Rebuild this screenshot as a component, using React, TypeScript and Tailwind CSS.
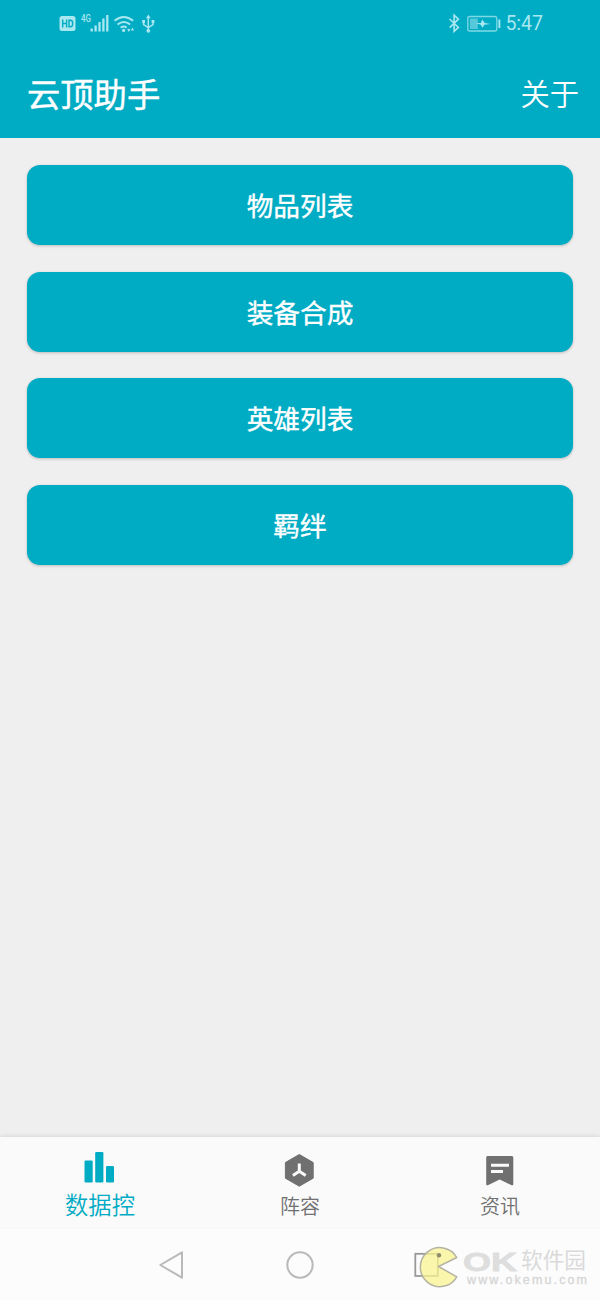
import type { ReactNode } from "react";

const ACTIONS = ["物品列表", "装备合成", "英雄列表", "羁绊"];

function StatusBar() {
  return (
    <div className="flex h-[47px] items-center justify-between pl-[59px] pr-[57px] text-[#a9e8f0]">
      <svg width="98" height="24" viewBox="0 0 98 24" fill="none" stroke="currentColor">
        {/* HD badge */}
        <rect x="0.5" y="4" width="16" height="15" rx="2.5" fill="currentColor" stroke="none" />
        <path d="M3.7 7.5v8M7.6 7.5v8M3.7 11.5h3.9M10 8.2v6.6h1.3q2.3 0 2.3-2.2v-2.2q0-2.2-2.3-2.2z" stroke="#00abc4" strokeWidth="1.4" />
        <text x="22" y="10" fontSize="11" fontWeight="500" fill="currentColor" stroke="none" textLength="10" lengthAdjust="spacingAndGlyphs" className="font-[Roboto,sans-serif]">4G</text>
        {/* signal */}
        <path d="M32.7 19.5v-3M36.6 19.5v-6M40.5 19.5V10M44.4 19.5V6.5M48.3 19.5V3" strokeWidth="2.3" />
        {/* wifi */}
        <path d="M55.5 8.8q9.3-7.5 18.7 0M58.5 12.6q6.4-5 12.6 0M61.6 15.7q3.3-2.3 6 0" strokeWidth="1.9" />
        <circle cx="64.6" cy="18.4" r="1.6" fill="currentColor" stroke="none" />
        <path d="M69.8 20l-1.6-3h3.2zM73.4 15.5l1.6 3h-3.2z" fill="currentColor" stroke="none" />
        {/* usb */}
        <path d="M89.3 5v13M84.6 9.5v3.2l4.7 3M94 9.5v3.2l-4.7 3" strokeWidth="1.5" />
        <path d="M89.3 2.5l2.4 3.7h-4.8zM83.2 8h2.8v3h-2.8zM92.6 8h2.8v3h-2.8z" fill="currentColor" stroke="none" />
        <circle cx="89.3" cy="18.8" r="1.9" fill="currentColor" stroke="none" />
      </svg>
      <div className="flex items-center">
        <svg width="54" height="24" viewBox="0 0 54 24" fill="none" stroke="currentColor">
          <path d="M2.6 7l8.8 8.4-4.3 4V3.2l4.3 4-8.8 8.4" strokeWidth="1.6" />
          <rect x="20.8" y="4.5" width="29" height="14.5" rx="2" strokeWidth="1.3" opacity="0.75" />
          <rect x="22.8" y="6.5" width="8" height="10.5" fill="currentColor" stroke="none" opacity="0.5" />
          <path d="M28.5 11.2l5.5-.3 1.2-3.4 2.6 3.4 5.8 1.1-6.4.8-1.5 3-2.3-3.2z" fill="currentColor" stroke="none" />
          <path d="M52.4 7.5v8.5" strokeWidth="1.9" />
        </svg>
        <span className="ml-1 font-[Roboto,sans-serif] text-[19.5px] leading-6">5:47</span>
      </div>
    </div>
  );
}

function ActionButton({ label }: { label: string }) {
  return (
    <button className="h-20 w-full rounded-[13px] bg-[#00abc4] text-[26.7px] font-normal text-white shadow-[0_1px_3px_rgba(0,0,0,0.22)] [-webkit-text-stroke:0.4px_white]">
      {label}
    </button>
  );
}

function Tab({ label, active, children }: { label: string; active?: boolean; children: ReactNode }) {
  return (
    <div className={active ? "flex flex-1 flex-col items-center pt-[13px] text-[#00abc4]" : "flex flex-1 flex-col items-center pt-[15px] text-[#707070]"}>
      {children}
      <span className={active ? "mt-[4px] text-[23.3px] font-[350] leading-7" : "mt-[4px] text-[20px] font-[350] leading-7"}>
        {label}
      </span>
    </div>
  );
}

function Watermark() {
  return (
    <svg className="absolute left-[410px] top-[1240px]" width="190" height="60" viewBox="0 0 190 60">
      <path d="M46.8 17.5A19.5 19.5 0 1 0 46.8 36.8L28.5 26.5z" fill="#f9f692" fillOpacity="0.75" stroke="#b5b3a4" strokeWidth="1.5" strokeLinejoin="round" />
      <circle cx="29" cy="15.2" r="2.2" fill="#8f8d70" />
      <text x="53" y="30.5" fontSize="26" fontWeight="700" fill="#dedede" stroke="#dedede" strokeWidth="0.8" textLength="54" lengthAdjust="spacingAndGlyphs" className="font-['Liberation_Sans',sans-serif]">OK</text>
      <text x="111" y="28" fontSize="22" fill="#dadada" textLength="65" lengthAdjust="spacingAndGlyphs">软件园</text>
      <text x="57" y="44" fontSize="12.5" fill="#d6d6d6" stroke="#d6d6d6" strokeWidth="0.3" textLength="120" className="font-['Liberation_Sans',sans-serif]">www.okemu.com</text>
    </svg>
  );
}

export default function App() {
  return (
    <div className="relative flex h-[1300px] w-[600px] flex-col overflow-hidden bg-[#efefef] font-['Noto_Sans_CJK_SC',sans-serif]">
      <header className="h-[138px] shrink-0 bg-[#00abc4]">
        <StatusBar />
        <div className="flex h-[91px] items-center justify-between pl-[27px] pr-[21px] text-white">
          <h1 className="text-[33.3px] font-normal leading-none [-webkit-text-stroke:0.4px_white]">云顶助手</h1>
          <span className="text-[29.3px] font-[350] leading-none">关于</span>
        </div>
      </header>

      <main className="flex flex-1 flex-col gap-[26.7px] px-[27px] pt-[27px]">
        {ACTIONS.map((label) => (
          <ActionButton key={label} label={label} />
        ))}
      </main>

      <nav className="flex h-[91px] shrink-0 bg-[#fafafa] shadow-[0_-1px_4px_rgba(0,0,0,0.1)]">
        <Tab label="数据控" active>
          <svg width="34" height="36" viewBox="0 0 34 36" fill="currentColor">
            <rect x="1.5" y="10.5" width="8.2" height="22" rx="1.2" />
            <rect x="12.2" y="2" width="8.2" height="30.5" rx="1.2" />
            <rect x="23" y="16" width="8" height="16.5" rx="1.2" />
          </svg>
        </Tab>
        <Tab label="阵容">
          <svg width="34" height="36" viewBox="0 0 34 36">
            <path d="M16.3 2.5l13.9 8v15.7l-13.9 8-13.9-8V10.5z" fill="currentColor" stroke="currentColor" strokeLinejoin="round" />
            <path d="M16.3 11.5v8.2M16.3 19.2l-6.4 4.2M16.3 19.2l6.4 4.2" stroke="#fafafa" strokeWidth="3" fill="none" />
          </svg>
        </Tab>
        <Tab label="资讯">
          <svg width="34" height="36" viewBox="0 0 34 36">
            <path d="M4.5 4h24.3q1.5 0 1.5 1.5v26.8q0 1.5-1.6.9L16.7 27.5 4.8 33.2q-1.6.6-1.6-.9V5.5Q3.2 4 4.5 4z" fill="currentColor" />
            <path d="M8 13.3h18M8 19.5h12" stroke="#fafafa" strokeWidth="3" />
          </svg>
        </Tab>
      </nav>

      {/* system navigation */}
      <div className="flex h-[72px] shrink-0 items-center justify-between border-t border-[#f8f8f8] bg-[#fcfcfc] pl-[158px] pr-[158px]">
        <svg width="28" height="30" viewBox="0 0 28 30" fill="none" stroke="#b9b9b9" strokeWidth="2" strokeLinejoin="round">
          <path d="M2.3 15L24 2.3v25.4z" />
        </svg>
        <svg width="30" height="30" viewBox="0 0 30 30" fill="none" stroke="#b9b9b9" strokeWidth="2">
          <circle cx="15" cy="15" r="12.7" />
        </svg>
        <svg width="28" height="30" viewBox="0 0 28 30" fill="none" stroke="#999" strokeWidth="1.8">
          <rect x="1.3" y="3.8" width="22.5" height="22.2" />
        </svg>
      </div>
      <Watermark />
    </div>
  );
}
